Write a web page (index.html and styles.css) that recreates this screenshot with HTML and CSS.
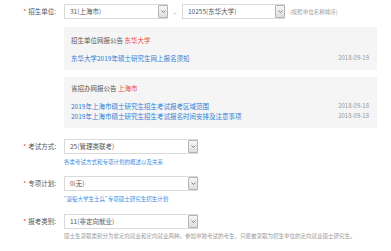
FILE: index.html
```html
<!DOCTYPE html>
<html lang="zh-CN">
<head>
<meta charset="utf-8">
<link rel="stylesheet" href="styles.css">
</head>
<body>
<div class="form">
  <div class="row row-unit">
    <div class="label"><span class="star">*</span>招生单位:</div>
    <div class="field">
      <div class="line">
        <div class="select w1"><span class="val">31(上海市)</span><span class="btn"><svg width="5" height="3" viewBox="0 0 5 3"><polyline points="0.5,0.5 2.5,2.5 4.5,0.5" fill="none" stroke="#666" stroke-width="0.8"/></svg></span></div>
        <span class="dash">-</span>
        <div class="select w2"><span class="val">10255(东华大学)</span><span class="btn"><svg width="5" height="3" viewBox="0 0 5 3"><polyline points="0.5,0.5 2.5,2.5 4.5,0.5" fill="none" stroke="#666" stroke-width="0.8"/></svg></span></div>
        <span class="note">(按照单位名称排序)</span>
      </div>
      <div class="box box-first">
        <div class="box-title">招生单位网报公告 <span class="red">东华大学</span></div>
        <div class="news">
          <div class="news-item"><a class="link">东华大学2019年硕士研究生网上报名须知</a><span class="date">2018-09-19</span></div>
        </div>
      </div>
      <div class="box box-second">
        <div class="box-title">省招办网报公告 <span class="red">上海市</span></div>
        <div class="news">
          <div class="news-item"><a class="link">2019年上海市硕士研究生招生考试报考区域范围</a><span class="date">2018-09-18</span></div>
          <div class="news-item"><a class="link">2019年上海市硕士研究生招生考试报名时间安排及注意事项</a><span class="date">2018-09-18</span></div>
        </div>
      </div>
    </div>
  </div>

  <div class="row row-2">
    <div class="label"><span class="star">*</span>考试方式:</div>
    <div class="field">
      <div class="select w3"><span class="val">25(管理类联考)</span><span class="btn"><svg width="5" height="3" viewBox="0 0 5 3"><polyline points="0.5,0.5 2.5,2.5 4.5,0.5" fill="none" stroke="#666" stroke-width="0.8"/></svg></span></div>
      <div class="hint hint-link">各类考试方式和专项计划的概述以及关系</div>
    </div>
  </div>

  <div class="row row-3">
    <div class="label"><span class="star">*</span>专项计划:</div>
    <div class="field">
      <div class="select w3"><span class="val">0(无)</span><span class="btn"><svg width="5" height="3" viewBox="0 0 5 3"><polyline points="0.5,0.5 2.5,2.5 4.5,0.5" fill="none" stroke="#666" stroke-width="0.8"/></svg></span></div>
      <div class="hint hint-link">"退役大学生士兵"专项硕士研究生招生计划</div>
    </div>
  </div>

  <div class="row row-4">
    <div class="label"><span class="star">*</span>报考类别:</div>
    <div class="field">
      <div class="select w3"><span class="val">11(非定向就业)</span><span class="btn"><svg width="5" height="3" viewBox="0 0 5 3"><polyline points="0.5,0.5 2.5,2.5 4.5,0.5" fill="none" stroke="#666" stroke-width="0.8"/></svg></span></div>
      <div class="hint hint-gray">硕士生录取类别分为非定向就业和定向就业两种。参加单独考试的考生，只能被录取为招生单位的定向就业硕士研究生。</div>
    </div>
  </div>
</div>
</body>
</html>
```

FILE: styles.css
```css
html, body {
  margin: 0;
  padding: 0;
  background: #ffffff;
}
body {
  font-family: "Noto Sans CJK SC", "Noto Sans", sans-serif;
  font-size: 6.5px;
  color: #555555;
  width: 391px;
  height: 251px;
  overflow: hidden;
}
.form {
  display: flex;
  flex-direction: column;
  padding-top: 4px;
}
.row {
  display: grid;
  grid-template-columns: 64px 1fr;
  align-items: start;
}
.row-2 { margin-top: 11px; }
.row-3 { margin-top: 10px; }
.row-4 { margin-top: 11px; }
.label {
  height: 15px;
  line-height: 15px;
  text-align: right;
  padding-right: 8px;
  white-space: nowrap;
  color: #555;
}
.star {
  color: #e8453c;
  margin-right: 2px;
}
.field {
  display: flex;
  flex-direction: column;
  align-items: flex-start;
}
.line {
  display: flex;
  align-items: center;
  height: 15px;
}
.select {
  box-sizing: border-box;
  height: 15px;
  border: 1px solid #dadada;
  background: #fff;
  display: flex;
  align-items: stretch;
  justify-content: space-between;
}
.w1 { width: 104px; }
.w2 { width: 103px; }
.w3 { width: 134px; }
.val {
  line-height: 13px;
  padding-left: 5px;
  color: #555;
  white-space: nowrap;
}
.btn {
  box-sizing: border-box;
  width: 10px;
  border: 1px solid #b4b4b4;
  border-radius: 1px;
  background: linear-gradient(#f6f6f6, #dedede);
  display: flex;
  align-items: center;
  justify-content: center;
  margin-right: -1px;
}
.dash {
  width: 14px;
  text-align: center;
  color: #777;
}
.note {
  margin-left: 5px;
  font-size: 5.5px;
  color: #999;
  white-space: nowrap;
}
.box {
  box-sizing: border-box;
  width: 313px;
  background: #f5f5f5;
  padding: 9px 8px 7px 7px;
}
.box-first { margin-top: 8px; }
.box-second { margin-top: 7px; padding-top: 7px; }
.box-title {
  line-height: 9px;
  color: #555;
  margin-bottom: 8px;
}
.red { color: #ee4a40; }
.news-item {
  display: flex;
  justify-content: space-between;
  line-height: 10px;
}
.link {
  color: #2f80d8;
  white-space: nowrap;
}
.date {
  color: #999;
  font-size: 6px;
}
.hint {
  font-size: 5.5px;
  line-height: 8px;
  white-space: nowrap;
}
.row-2 .hint { margin-top: 4px; }
.row-3 .hint { margin-top: 4px; }
.row-4 .hint { margin-top: 3px; }
.hint-link { color: #3a8fe3; }
.hint-gray { color: #999; }
```
